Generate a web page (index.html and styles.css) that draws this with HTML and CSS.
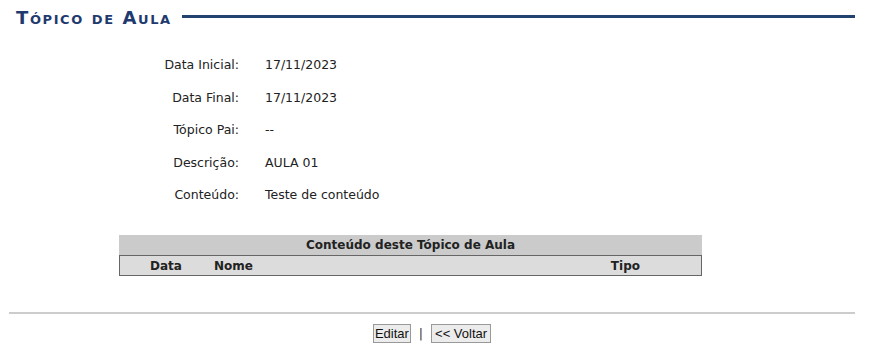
FILE: index.html
```html
<!DOCTYPE html>
<html>

<head>
    <title>Tópico de Aula</title>
    <link rel="stylesheet" href="styles.css">
</head>

<body>
    <div class="titulo">
        <h2>Tópico de Aula</h2>
        <span class="titulo-linha"></span>
    </div>

    <div class="detalhes">
        <span class="rotulo">Data Inicial:</span>
        <span class="valor">17/11/2023</span>

        <span class="rotulo">Data Final:</span>
        <span class="valor">17/11/2023</span>

        <span class="rotulo">Tópico Pai:</span>
        <span class="valor">--</span>

        <span class="rotulo">Descrição:</span>
        <span class="valor">AULA 01</span>

        <span class="rotulo">Conteúdo:</span>
        <span class="valor">Teste de conteúdo</span>
    </div>

    <table class="listagem">
        <caption>Conteúdo deste Tópico de Aula</caption>
        <thead>
            <tr>
                <th class="col-data">Data</th>
                <th class="col-nome">Nome</th>
                <th class="col-tipo">Tipo</th>
            </tr>
        </thead>
    </table>

    <div class="rodape">
        <button class="botao">Editar</button>
        <span class="separador">|</span>
        <button class="botao botao-voltar">&lt;&lt; Voltar</button>
    </div>
</body>

</html>
```

FILE: styles.css
```css
body {
    background: white;
    color: #222;
    font-family: "DejaVu Sans", Verdana, sans-serif;
    font-size: 12.5px;
    margin: 0;
    padding: 0;
}

.titulo {
    align-items: center;
    display: flex;
    padding: 7px 14px 0 16px;
}

.titulo h2 {
    color: #1f3a6e;
    font-size: 18px;
    font-variant: small-caps;
    font-weight: bold;
    letter-spacing: 1.6px;
    margin: 0 10px 0 0;
}

.titulo-linha {
    border-top: 3px solid #22426f;
    flex: 1;
    margin-top: -3px;
}

.detalhes {
    display: grid;
    grid-template-columns: 239px auto;
    column-gap: 26px;
    row-gap: 16.5px;
    margin-top: 29px;
}

.rotulo {
    line-height: 16px;
    text-align: right;
}

.valor {
    line-height: 16px;
}

.listagem {
    border-collapse: collapse;
    font-size: 12px;
    margin: 32px 0 0 119px;
    width: 583px;
}

.listagem caption {
    background: #cbcbcb;
    font-weight: bold;
    height: 20px;
    line-height: 20px;
    padding: 0;
}

.listagem th {
    background: #dcdcdc;
    border: 1px solid #666;
    border-left: none;
    border-right: none;
    font-weight: bold;
    height: 19px;
    padding: 0;
    text-align: left;
}

.listagem th.col-data {
    border-left: 1px solid #666;
    padding-left: 30px;
    width: 64px;
}

.listagem th.col-tipo {
    border-right: 1px solid #666;
    padding-right: 61px;
    text-align: right;
}

.rodape {
    border-top: 2px solid #cccccc;
    margin: 36px 14px 0 9px;
    padding-top: 10px;
    text-align: center;
}

.botao {
    background: #ececec;
    border: 1px solid #999;
    color: #111;
    font-family: "Liberation Sans", sans-serif;
    font-size: 13px;
    height: 19px;
    margin: 0;
    padding: 0 1px;
}

.botao-voltar {
    padding: 0 3px;
}

.separador {
    color: #333;
    margin: 0 4px;
}
```
